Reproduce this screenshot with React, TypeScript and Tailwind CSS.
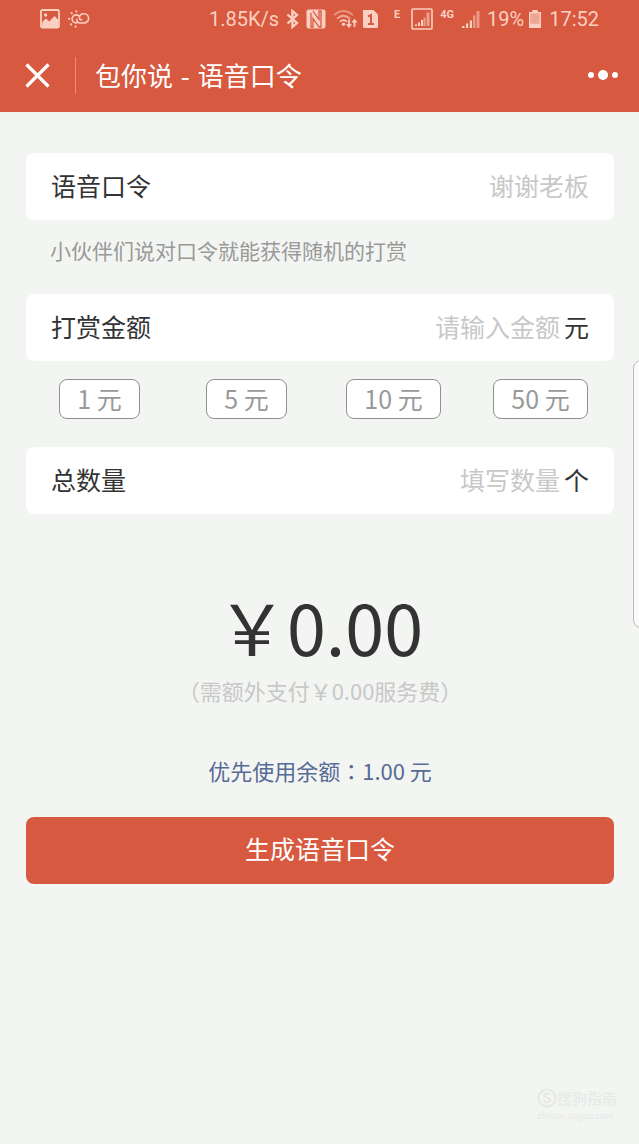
import { useState } from "react";

const presets = [1, 5, 10, 50];

function StatusBar() {
  return (
    <div className="flex h-[38px] items-center justify-between px-10 font-['Roboto',sans-serif] text-xl text-[#fbd0c2]">
      <div className="flex items-center gap-2">
        {/* picture */}
        <svg width="20" height="20" viewBox="0 0 20 20" fill="none">
          <rect x="1" y="1" width="18" height="17.5" rx="1.5" stroke="currentColor" strokeWidth="1.8" />
          <circle cx="5.6" cy="6" r="1.7" fill="currentColor" />
          <path d="M2.5 12.5 6 9.5l3.2 3L14.5 7l3.5 3.5V18H2z" fill="currentColor" />
        </svg>
        {/* weather */}
        <svg width="22" height="20" viewBox="0 0 22 20" fill="none" stroke="currentColor" strokeWidth="1.6" strokeLinecap="round">
          <path d="M10.2 6.5a4 4 0 1 0-1.4 7.3M8.8 10.5q0 3.5 3.5 3.5H16a4.6 4.6 0 0 0 0-9.2c-3.2 0-4.6 2-4.6 3.9 0 1.3 1 2.1 2.4 2.1" />
          <path d="M8.3 2.6v-.4M3.8 4.3l-.2-.2M1.3 9.7H1M3.2 15.3l-.2.2M7.6 17.8v-.3" strokeWidth="2" />
        </svg>
      </div>

      <div className="flex items-center gap-[7px]">
        <span>1.85K/s</span>
        {/* bluetooth */}
        <svg width="13" height="20" viewBox="0 0 13 20" fill="none" stroke="currentColor" strokeWidth="2.3">
          <path d="M1.5 5.5 11 14l-4.6 4V2L11 6l-9.5 8.5" />
        </svg>
        {/* NFC */}
        <svg width="20" height="20" viewBox="0 0 20 20">
          <rect x="0.5" y="0.5" width="19" height="19" rx="2" fill="currentColor" />
          <path d="M5 4v14h2V9.5l6 8.500h2V2h-2v8.500L7 2" fill="none" stroke="#d7593f" strokeWidth="1.3" />
        </svg>
        <div className="flex items-center gap-1">
          {/* wifi */}
          <svg width="25" height="20" viewBox="0 0 25 20" fill="none" stroke="currentColor" strokeWidth="1.8">
            <path d="M1 6.2q9.500-8.400 19 0" opacity="0.5" />
            <path d="M4 9.6q6.500-5.800 13 0" opacity="0.7" />
            <path d="M7 12.6q3.500-3 7 0" />
            <circle cx="10.5" cy="15.3" r="1.7" fill="currentColor" stroke="none" />
            <path d="M16 10.5v6M21.5 18v-6" />
            <path d="M12.9 15.2h6.2L16 19zM18.4 13.5h6.2L21.500 9.700z" fill="currentColor" stroke="none" />
          </svg>
          {/* sim 1 */}
          <svg width="17" height="20" viewBox="0 0 17 20">
            <path d="M1 1h10.5L16 5.5v12q0 1.500-1.500 1.500h-12Q1 19 1 17.500z" fill="currentColor" />
            <path d="M6 7.5 9 6v9M6 15h6" fill="none" stroke="#d7593f" strokeWidth="2" />
          </svg>
        </div>
        <span className="ml-2 mb-2 text-[11px] leading-3 font-bold">E</span>
        <svg className="ml-1" width="22" height="22" viewBox="0 0 22 22" fill="currentColor">
          <rect x="1" y="1" width="20" height="20" rx="1" fill="none" stroke="currentColor" strokeWidth="1.6" />
          <path d="M4 16.5h2V18H4zM7 14.5h2V18H7zM10 12h2v6h-2z" />
          <path d="M12.5 9.5h2V18h-2zM15.5 4.5h3V18h-3z" opacity="0.6" />
        </svg>
        <span className="mb-2 text-[11px] leading-3 font-bold">4G</span>
        <svg width="19" height="20" viewBox="0 0 19 20" fill="currentColor">
          <path d="M1 17h2.500v2H1zM5 14.500h2.200V19H5zM8.800 11.500H11V19H8.800z" />
          <path d="M12 6.500h2.500V19H12zM15.500 2h3v17h-3z" opacity="0.55" />
        </svg>
        <div className="flex items-center gap-1">
          <span>19%</span>
          <svg width="14" height="20" viewBox="0 0 14 20" fill="currentColor">
            <path d="M4.5 1h5v2H13v16H1V3h3.5z" opacity="0.65" />
            <path d="M4.5 1h5v2H13v16H1V3h3.5zM2.3 4.3v10.5h9.4V4.3z" fillRule="evenodd" />
          </svg>
        </div>
        <span>17:52</span>
      </div>
    </div>
  );
}

type FieldProps = {
  id: string;
  label: string;
  placeholder: string;
  unit?: string;
  value: string;
  onChange: (value: string) => void;
};

function Field({ id, label, placeholder, unit, value, onChange }: FieldProps) {
  return (
    <div className="flex h-[67px] items-center rounded-lg bg-white px-[25px] text-[25px] text-[#333]">
      <label htmlFor={id} className="shrink-0 pb-0.5">{label}</label>
      <input
        id={id}
        value={value}
        placeholder={placeholder}
        onChange={(e) => onChange(e.target.value)}
        className="h-full min-w-0 flex-1 bg-transparent pb-1 text-right outline-none placeholder:text-[#c8c8c8]"
      />
      {unit && <span className="ml-1 shrink-0 pb-0.5">{unit}</span>}
    </div>
  );
}

export default function App() {
  const [phrase, setPhrase] = useState("");
  const [amount, setAmount] = useState("");
  const [count, setCount] = useState("");

  return (
    <div className="relative min-h-screen overflow-hidden bg-[#f3f5f2] font-['Noto_Sans_CJK_SC',sans-serif]" lang="zh-CN">
      <header className="bg-[#d7593f] text-white">
        <StatusBar />
        <div className="flex h-[74px] items-center px-[21px]">
          <button type="button" aria-label="关闭" className="p-1">
            <svg width="25" height="25" viewBox="0 0 25 25" fill="none" stroke="currentColor" strokeWidth="3.2">
              <path d="m1.5 1.5 22 22M23.5 1.5l-22 22" />
            </svg>
          </button>
          <span className="ml-[21px] h-[37px] w-px bg-[#e88d78]" />
          <h1 className="ml-[19px] flex-1 pb-0.5 text-[26px]">
            包你说 <span className="mx-0.5">-</span> 语音口令
          </h1>
          <button type="button" aria-label="更多">
            <svg width="30" height="12" viewBox="0 0 30 12" fill="currentColor">
              <circle cx="3" cy="6" r="3" />
              <circle cx="15" cy="6" r="5" />
              <circle cx="27" cy="6" r="3" />
            </svg>
          </button>
        </div>
      </header>

      <main className="pt-[41px] pr-[25px] pl-[26px]">
        <Field id="phrase" label="语音口令" placeholder="谢谢老板" value={phrase} onChange={setPhrase} />
        <p className="px-6 pt-[15px] pb-[29px] text-[21px] leading-[30px] text-[#999]">小伙伴们说对口令就能获得随机的打赏</p>

        <Field id="amount" label="打赏金额" placeholder="请输入金额" unit="元" value={amount} onChange={setAmount} />
        <div className="grid grid-cols-4 justify-items-center pt-[18px] pb-7">
          {presets.map((n) => (
            <button
              key={n}
              type="button"
              onClick={() => setAmount(String(n))}
              className="h-10 rounded-lg border border-[#909090] bg-white px-[17px] pb-0.5 text-[25px] leading-9 text-[#999]"
            >
              {n} 元
            </button>
          ))}
        </div>

        <Field id="count" label="总数量" placeholder="填写数量" unit="个" value={count} onChange={setCount} />

        <div className="pt-[76px] text-center">
          <p className="text-[70px] leading-[72px] text-[#333]">￥0.00</p>
          <p className="mt-3 text-[22px] leading-8 text-[#c8c8c8]">（需额外支付￥0.00服务费）</p>
          <p className="mt-12 text-[22px] leading-8 text-[#576b95]">
            优先使用余额<span className="font-['Noto_Sans_CJK_TC',sans-serif]" lang="zh-TW">：</span>1.00 元
          </p>
        </div>

        <button type="button" className="mt-[31px] h-[67px] w-full rounded-lg bg-[#d7593f] pb-1 text-[25px] text-white">
          生成语音口令
        </button>
      </main>

      {/* edge panel handle */}
      <div className="absolute top-[360px] -right-3 h-[268px] w-[18px] rounded-lg border border-[#bbb] bg-[#f9faf9]" />

      <div className="absolute right-[22px] bottom-5 text-[#e6e8e6]">
        <div className="flex items-center text-[15px] leading-5">
          <svg width="20" height="20" viewBox="0 0 20 20" fill="none" stroke="currentColor" strokeWidth="2">
            <circle cx="10" cy="10" r="8.5" />
            <path d="M13.5 7c-1.5-2-6.5-1.8-6.5.6 0 2.6 6.5 1.7 6.5 4.5 0 2.6-5.5 2.8-7 .5" />
          </svg>
          <span>搜狗指南</span>
        </div>
        <p className="text-[9px] leading-4">zhinan.sogou.com</p>
      </div>
    </div>
  );
}
